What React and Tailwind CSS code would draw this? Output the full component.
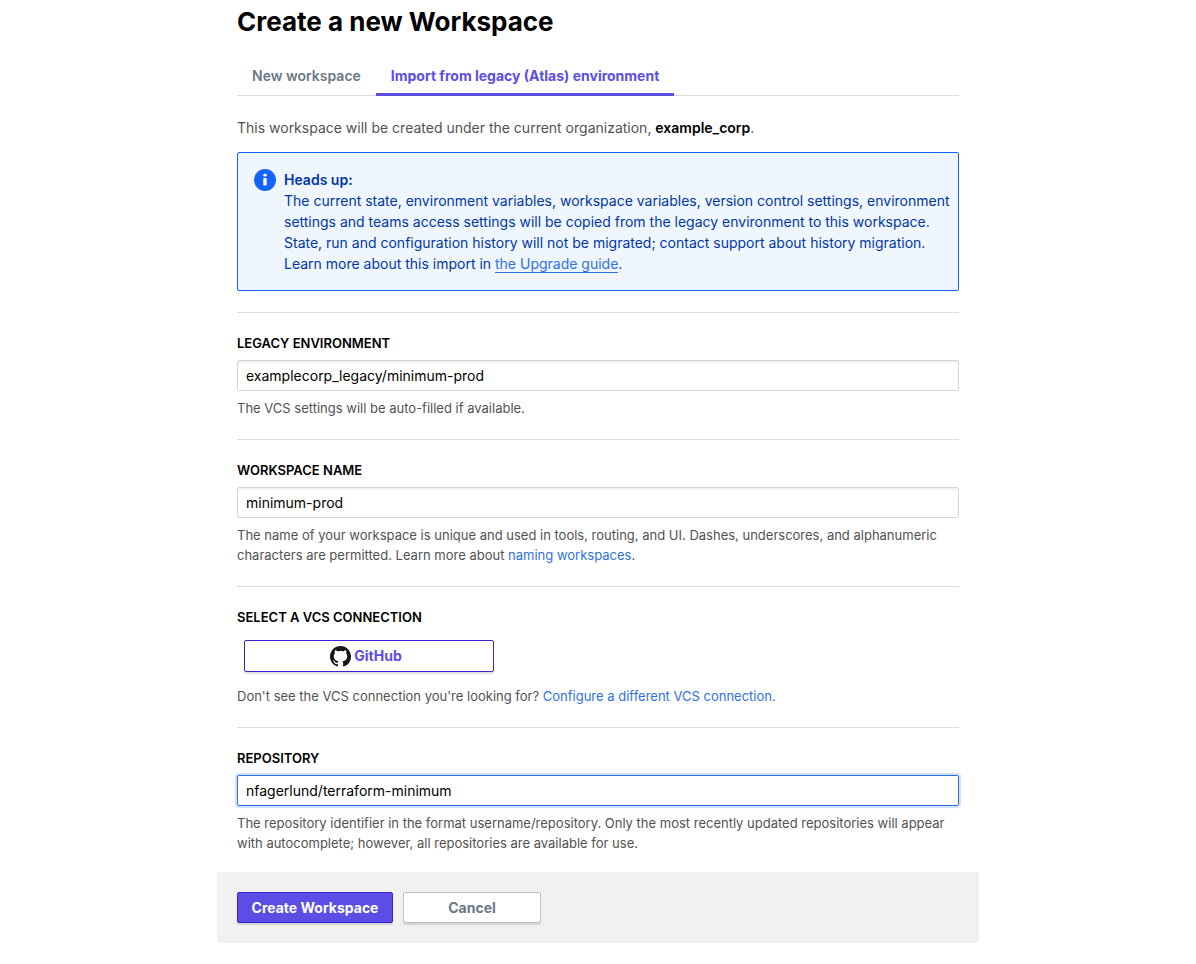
const label = "block text-[13px] leading-5 font-semibold text-black";
const section = "border-t border-[#dadbdd] pt-5 pb-[21px]";
const help = "text-[13px] leading-5 text-[#525252]";
const link = "text-[#2e71e5]";
const field = "mt-[7px] block h-[31px] w-full rounded-[2px] border px-2 text-sm text-black outline-none";
const idle = "border-[#d5d6d8] shadow-[inset_0_2px_2px_rgba(0,0,0,0.06)] focus:border-[#2e71e5]";
const active = "border-[#2e71e5] shadow-[0_0_1px_2px_#cfe0fb]";

function InfoIcon() {
  return (
    <svg viewBox="0 0 22 22" className="size-[22px] shrink-0" aria-hidden="true">
      <circle cx="11" cy="11" r="11" fill="#1563ff" />
      <rect x="9.3" y="9" width="3.4" height="7.5" rx="1" fill="white" />
      <rect x="9.3" y="4.7" width="3.4" height="2.8" rx="1.2" fill="white" />
    </svg>
  );
}

function GitHubMark() {
  return (
    <svg viewBox="0 0 16 16" className="size-[21px] fill-[#181717]" aria-hidden="true">
      <path d="M8 0C3.58 0 0 3.58 0 8c0 3.54 2.29 6.53 5.47 7.59.4.07.55-.17.55-.38 0-.19-.01-.82-.01-1.49-2.01.37-2.53-.49-2.69-.94-.09-.23-.48-.94-.82-1.13-.28-.15-.68-.52-.01-.53.63-.01 1.08.58 1.23.82.72 1.21 1.87.87 2.33.66.07-.52.28-.87.51-1.07-1.78-.2-3.64-.89-3.64-3.95 0-.87.31-1.59.82-2.15-.08-.2-.36-1.02.08-2.12 0 0 .67-.21 2.2.82.64-.18 1.32-.27 2-.27s1.36.09 2 .27c1.53-1.04 2.2-.82 2.2-.82.44 1.1.16 1.92.08 2.12.51.56.82 1.27.82 2.15 0 3.07-1.87 3.75-3.65 3.95.29.25.54.73.54 1.48 0 1.07-.01 1.93-.01 2.2 0 .21.15.46.55.38A8.01 8.01 0 0 0 16 8c0-4.42-3.58-8-8-8z" />
    </svg>
  );
}

export default function App() {
  return (
    <main className="mx-auto max-w-[762px] font-[Inter,sans-serif] text-sm">
      <div className="px-5">
        <h1 className="pt-1 text-[26px] leading-9 font-bold text-black">Create a new Workspace</h1>
        <nav className="mt-4 flex border-b border-[#dadbdd]">
          <a href="#new" className="px-[15px] pt-2.5 pb-[7px] leading-5 font-semibold text-[#6a7786]">
            New workspace
          </a>
          <a
            href="#import"
            aria-current="page"
            className="-mb-px border-b-3 border-[#5c4ee5] px-[15px] pt-2.5 pb-[7px] leading-5 font-bold text-[#5c4ee5]"
          >
            Import from legacy (Atlas) environment
          </a>
        </nav>
        <p className="mt-[22px] leading-5 text-[#525252]">
          This workspace will be created under the current organization,{" "}
          <strong className="font-semibold text-black">example_corp</strong>.
        </p>
        <section className="mt-3.5 flex gap-2 rounded-[2px] border border-[#1563ff] bg-[#eff6fd] py-4 pr-1 pl-4 text-[#0037a8]">
          <InfoIcon />
          <div className="leading-[21px]">
            <h2 className="font-semibold">Heads up:</h2>
            <p>
              The current state, environment variables, workspace variables, version control settings, environment
              settings and teams access settings will be copied from the legacy environment to this workspace. State,
              run and configuration history will not be migrated; contact support about history migration. Learn more
              about this import in{" "}
              <a href="#guide" className="border-b border-[#2e71e5] text-[#2e71e5]">the Upgrade guide</a>.
            </p>
          </div>
        </section>
      </div>
      <form className="mt-[21px]" onSubmit={(event) => event.preventDefault()}>
        <div className="px-5">
          <div className={section}>
            <label htmlFor="legacy" className={label}>LEGACY ENVIRONMENT</label>
            <input id="legacy" type="text" className={`${field} ${idle}`} defaultValue="examplecorp_legacy/minimum-prod" />
            <p className={`${help} mt-[7px]`}>The VCS settings will be auto-filled if available.</p>
          </div>
          <div className={section}>
            <label htmlFor="name" className={label}>WORKSPACE NAME</label>
            <input id="name" type="text" className={`${field} ${idle}`} defaultValue="minimum-prod" />
            <p className={`${help} mt-[7px]`}>
              The name of your workspace is unique and used in tools, routing, and UI. Dashes, underscores, and
              alphanumeric characters are permitted. Learn more about{" "}
              <a href="#naming" className={link}>naming workspaces</a>.
            </p>
          </div>
          <div className={section} role="group" aria-labelledby="vcs">
            <h2 id="vcs" className={label}>SELECT A VCS CONNECTION</h2>
            <button
              type="button"
              className="mt-[13px] ml-[7px] flex h-8 w-[250px] items-center justify-center gap-[3px] rounded-[2px] border border-[#3a24d6] bg-white pr-1.5 font-bold text-[#5c4ee5] shadow-[0_2px_1px_rgba(0,0,0,0.12)]"
            >
              <GitHubMark />
              GitHub
            </button>
            <p className={`${help} mt-3.5`}>
              Don't see the VCS connection you're looking for?{" "}
              <a href="#vcs" className={link}>Configure a different VCS connection.</a>
            </p>
          </div>
          <div className="border-t border-[#dadbdd] pt-5 pb-[19px]">
            <label htmlFor="repo" className={label}>REPOSITORY</label>
            <input id="repo" type="text" className={`${field} ${active}`} defaultValue="nfagerlund/terraform-minimum" />
            <p className={`${help} mt-[7px]`}>
              The repository identifier in the format username/repository. Only the most recently updated repositories
              will appear with autocomplete; however, all repositories are available for use.
            </p>
          </div>
        </div>
        <div className="flex gap-2.5 rounded-b bg-[#f1f1f1] p-5 font-bold">
          <button
            type="submit"
            className="h-[31px] w-[156px] rounded-[2px] border border-[#3a24d6] bg-[#5c4ee5] text-white shadow-[0_2px_1px_rgba(0,0,0,0.12)]"
          >
            Create Workspace
          </button>
          <button
            type="button"
            className="h-[31px] w-[138px] rounded-[2px] border border-[#bac1cc] bg-white text-[#6a7786] shadow-[0_2px_1px_rgba(0,0,0,0.12)]"
          >
            Cancel
          </button>
        </div>
      </form>
    </main>
  );
}
